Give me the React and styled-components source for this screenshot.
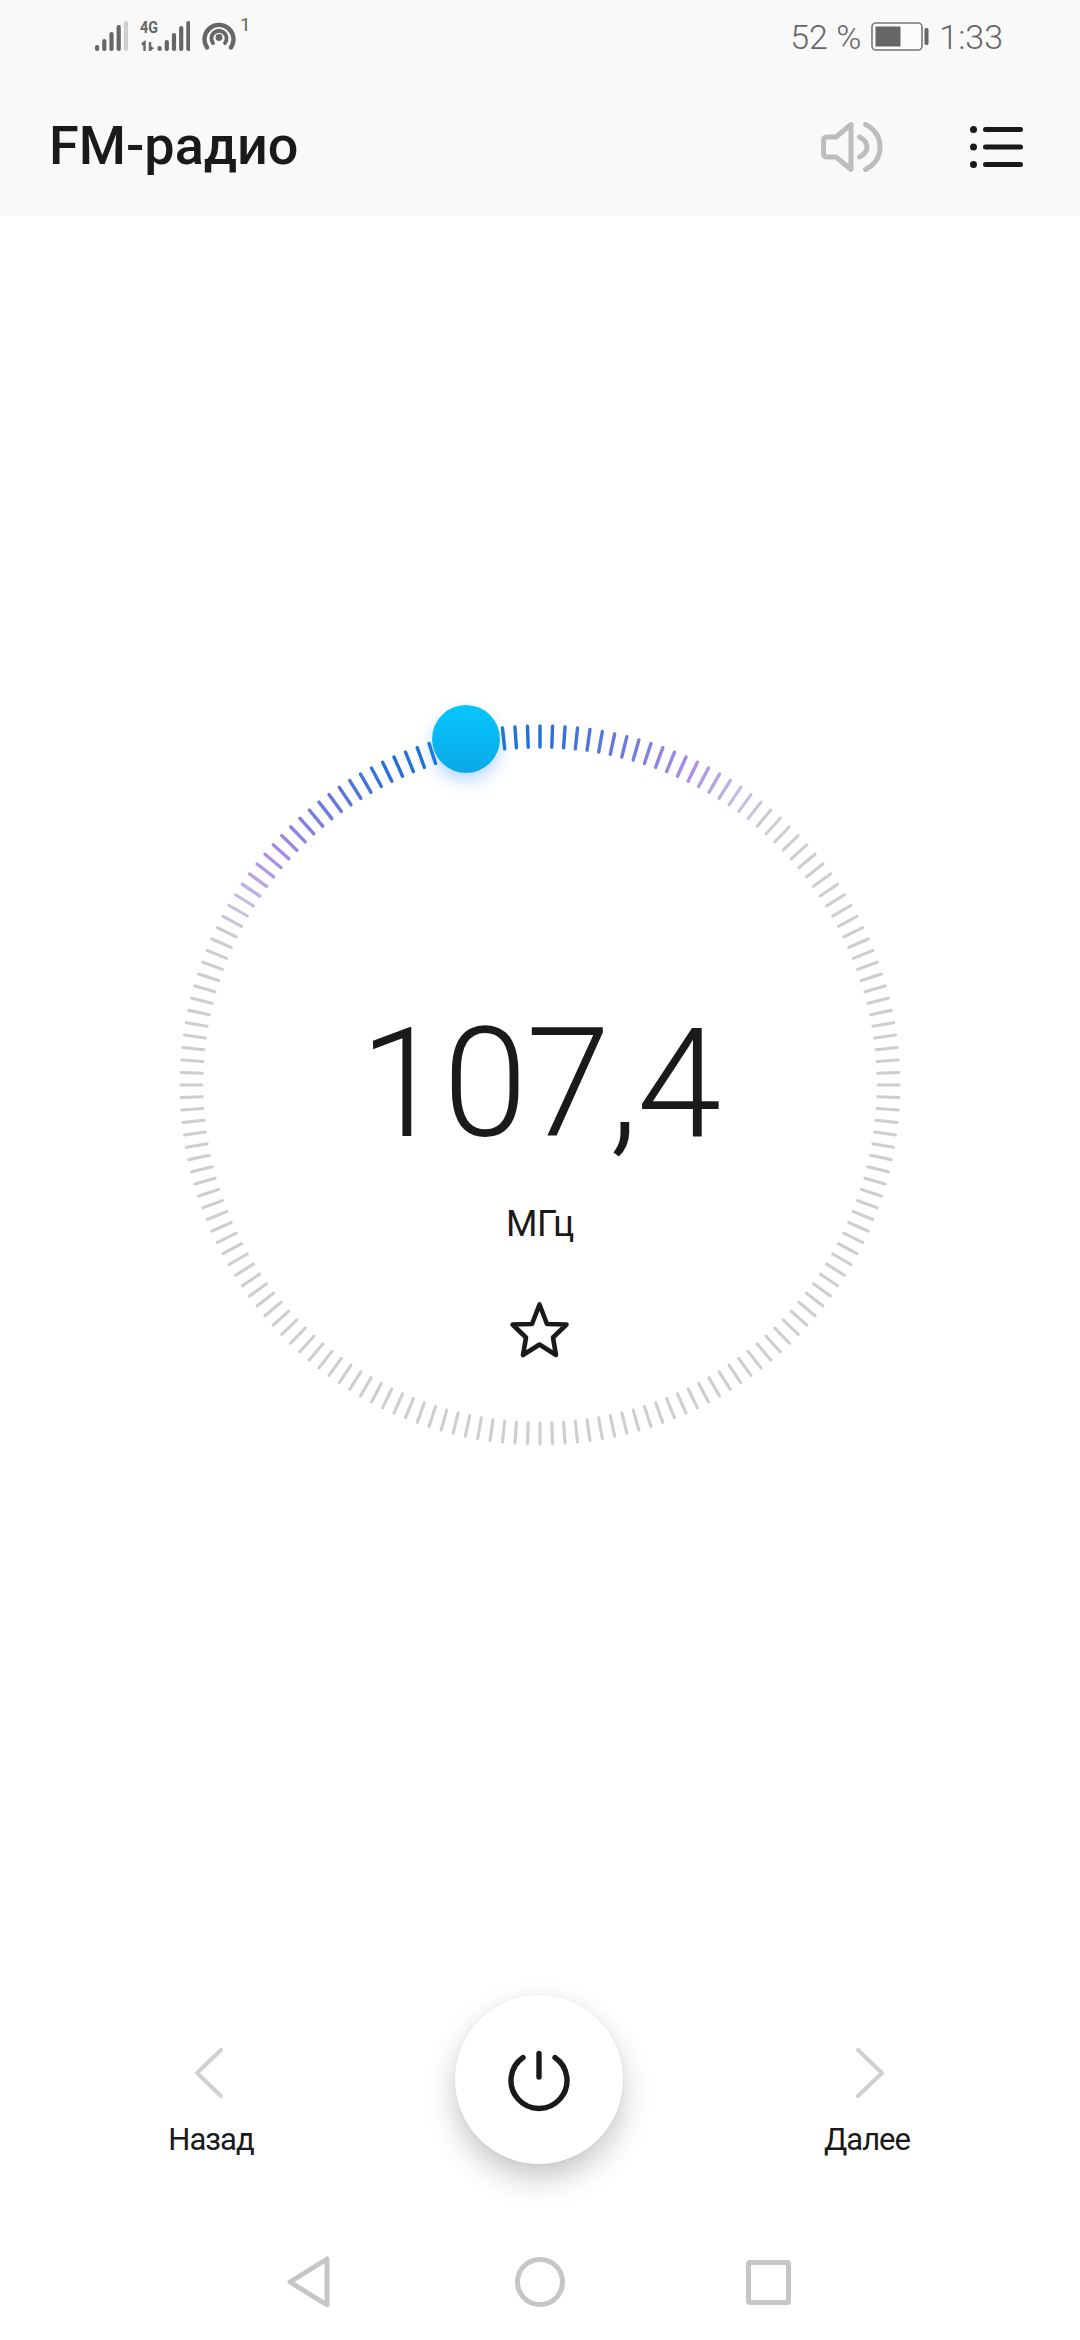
import React from 'react';
import styled, {createGlobalStyle} from 'styled-components';

const GlobalStyle = createGlobalStyle`
  html, body {
    margin: 0;
    padding: 0;
    background: #fff;
  }
  body {
    font-family: Roboto, 'Liberation Sans', sans-serif;
  }
`;

const Screen = styled.div`
  width: 1080px;
  height: 2340px;
  display: flex;
  flex-direction: column;
  overflow: hidden;
  background: #fff;
`;

const Header = styled.header`
  height: 216px;
  display: flex;
  flex-direction: column;
  background: #f9f9f9;
`;

const StatusBar = styled.div`
  height: 72px;
  display: flex;
  justify-content: space-between;
  align-items: center;
  padding: 0 77px 0 95px;
  box-sizing: border-box;
  color: #666;
`;

const StatusGroup = styled.div`
  display: flex;
  align-items: center;
  gap: ${props => props.$gap}px;
  padding-top: ${props => props.$top || 0}px;
`;

const StatusText = styled.span`
  font-size: 34px;
  font-weight: 300;
  line-height: 40px;
`;

const SimIndex = styled.span`
  align-self: flex-start;
  margin: -6px 0 0 -8px;
  font-size: 19px;
  line-height: 20px;
`;

const NetworkSvg = styled.svg`
  margin-top: -6px;
`;

const Toolbar = styled.div`
  flex: 1;
  display: flex;
  align-items: center;
  padding: 6px 57px 0 49px;
`;

const Title = styled.h1`
  flex: 1;
  margin: -3px 0 0;
  font-size: 54px;
  font-weight: 500;
  color: #1a1a1a;
`;

const ToolbarActions = styled.div`
  display: flex;
  align-items: center;
  gap: 87px;
`;

const Main = styled.main`
  flex: 1;
  padding-top: 508px;
`;

const Dial = styled.div`
  position: relative;
  width: 722px;
  height: 722px;
  margin: 0 auto;
  display: flex;
  flex-direction: column;
  align-items: center;
  padding-top: 284px;
  box-sizing: border-box;
  color: #1a1a1a;
`;

const DialTicks = styled.svg`
  position: absolute;
  left: 0;
  top: 0;
`;

const Thumb = styled.div`
  position: absolute;
  left: 253px;
  top: -19px;
  width: 68px;
  height: 68px;
  border-radius: 50%;
  background: linear-gradient(180deg, #07c6fe 0%, #0aa9e6 100%);
  box-shadow: 0 8px 16px rgba(30, 130, 255, 0.3);
`;

const Frequency = styled.div`
  position: relative;
  font-size: 152px;
  font-weight: 300;
  line-height: 152px;
  letter-spacing: -1.2px;
`;

const Unit = styled.div`
  position: relative;
  margin-top: 42px;
  font-size: 36px;
  line-height: 44px;
  letter-spacing: -0.4px;
`;

const StarIcon = styled.svg`
  position: relative;
  margin-top: 54px;
`;

const Controls = styled.div`
  display: grid;
  grid-template-columns: 1fr 168px 1fr;
  padding: 0 143px 0 141px;
  margin-bottom: 60px;
  height: 169px;
`;

const SideButton = styled.div`
  width: 140px;
  padding-top: 53px;
  display: flex;
  flex-direction: column;
  align-items: center;
  justify-self: ${props => props.$side};
`;

const ChevronIcon = styled.svg`
  margin-left: ${props => (props.$flip ? 6 : -5)}px;
`;

const SideLabel = styled.span`
  margin-top: 24px;
  font-size: 31px;
  line-height: 36px;
  letter-spacing: -1px;
  color: #1a1a1a;
`;

const PowerButton = styled.div`
  width: 168px;
  height: 169px;
  display: flex;
  align-items: center;
  justify-content: center;
  border-radius: 50%;
  background: #fff;
  box-shadow: 0 14px 30px rgba(0, 0, 0, 0.22), 0 0 4px rgba(0, 0, 0, 0.05);
`;

const NavBar = styled.nav`
  height: 116px;
  display: flex;
  align-items: center;
  justify-content: center;
  gap: 181px;
  padding-right: 2px;
`;

const TICK_COUNT = 180;
const THUMB_ANGLE = -12;

const COLOR_STOPS = [
  [0, [26, 122, 222]],
  [12, [34, 112, 214]],
  [25, [104, 120, 222]],
  [37, [168, 140, 230]],
  [46, [198, 186, 226]],
  [54, [206, 206, 206]],
];

function thumbDistance(angle) {
  return Math.abs(((angle - THUMB_ANGLE + 540) % 360) - 180);
}

function tickColor(angle) {
  const d = thumbDistance(angle);
  for (let i = 1; i < COLOR_STOPS.length; i++) {
    const [d0, c0] = COLOR_STOPS[i - 1];
    const [d1, c1] = COLOR_STOPS[i];
    if (d <= d1) {
      const t = (d - d0) / (d1 - d0);
      return `rgb(${c0.map((v, k) => Math.round(v + (c1[k] - v) * t)).join(',')})`;
    }
  }
  return '#cecece';
}

function Ticks() {
  const ticks = [];
  for (let i = 0; i < TICK_COUNT; i++) {
    const angle = (i * 360) / TICK_COUNT;
    const rad = (angle * Math.PI) / 180;
    const s = Math.sin(rad);
    const c = Math.cos(rad);
    ticks.push(
      <line
        key={i}
        x1={361 + 338 * s}
        y1={361 - 338 * c}
        x2={361 + 359 * s}
        y2={361 - 359 * c}
        stroke={tickColor(angle)}
        strokeWidth={thumbDistance(angle) < 46 ? 3.4 : 3.1}
        strokeLinecap="round"
      />
    );
  }
  return (
    <DialTicks width="722" height="722" viewBox="0 0 722 722">
      {ticks}
    </DialTicks>
  );
}

function Bars({x, heights, lastLight}) {
  return heights.map((h, i) => (
    <rect
      key={i}
      x={x + i * 7.2}
      y={30 - h}
      width="4.2"
      height={h}
      rx="2"
      fill={lastLight && i === heights.length - 1 ? '#cfcfcf' : '#666'}
    />
  ));
}

function SignalIcon() {
  return (
    <svg width="33" height="30" viewBox="0 0 33 30">
      <Bars x={0} heights={[6, 12, 19, 26, 30]} lastLight />
    </svg>
  );
}

function NetworkIcon() {
  return (
    <NetworkSvg width="50" height="36" viewBox="0 -6 50 36">
      <text x="0" y="12" fontFamily="Roboto, sans-serif" fontWeight="700" fontSize="17" fill="#666" textLength="18" lengthAdjust="spacingAndGlyphs">4G</text>
      <path d="M2 23.5 4.5 21.5V30M10 21V30" fill="none" stroke="#666" strokeWidth="2.4" />
      <path d="M10 24.5 14 27.3 10 30Z" fill="#666" />
      <Bars x={17.5} heights={[5, 11, 18, 25, 30]} />
    </NetworkSvg>
  );
}

function HotspotIcon() {
  return (
    <svg width="34" height="30" viewBox="0 0 34 30" fill="none" stroke="#666" strokeLinecap="round">
      <path d="M5 26.5A14.5 14.5 0 1 1 29 26.5" strokeWidth="4.4" />
      <path d="M11 22A7.6 7.6 0 1 1 23 22" strokeWidth="3.8" />
      <circle cx="17" cy="16.5" r="3.4" fill="#666" stroke="none" />
    </svg>
  );
}

function BatteryIcon() {
  return (
    <svg width="58" height="30" viewBox="0 0 58 30">
      <rect x="1" y="1" width="50" height="27" rx="4" fill="#fbfbfb" stroke="#777" strokeWidth="1.6" />
      <rect x="4.5" y="4.5" width="25" height="20" fill="#666" />
      <rect x="53.5" y="6" width="4" height="17" rx="1.5" fill="#666" />
    </svg>
  );
}

function SpeakerIcon() {
  return (
    <svg width="62" height="50" viewBox="0 0 62 50" fill="none" stroke="#bdbdbd" strokeWidth="5" strokeLinecap="round" strokeLinejoin="round">
      <path d="M30 2.5 15 15H6Q2.5 15 2.5 18.5V31.5Q2.5 35 6 35H15L30 47.5Z" />
      <path d="M38.5 15Q46 19 46 25T38.5 35" />
      <path d="M44.5 2.5Q59 10 59 25T44.5 47.5" />
    </svg>
  );
}

function ListIcon() {
  return (
    <svg width="53" height="42" viewBox="0 0 53 42">
      <g fill="#1a1a1a">
        <circle cx="3.5" cy="3.5" r="3.5" />
        <circle cx="3.5" cy="21" r="3.5" />
        <circle cx="3.5" cy="38.5" r="3.5" />
      </g>
      <path d="M15.5 3.5H50.5M15.5 21H50.5M15.5 38.5H50.5" stroke="#1a1a1a" strokeWidth="5" strokeLinecap="round" />
    </svg>
  );
}

function Chevron({flip}) {
  return (
    <ChevronIcon $flip={flip} width="28" height="50" viewBox="0 0 28 50" fill="none" stroke="#d0d0d0" strokeWidth="4" strokeLinecap="round" strokeLinejoin="round">
      <path d={flip ? 'M2 2 26 25 2 48' : 'M26 2 2 25 26 48'} />
    </ChevronIcon>
  );
}

function PowerIcon() {
  return (
    <svg width="64" height="64" viewBox="0 0 64 64" fill="none" stroke="#1a1a1a" strokeWidth="5.4" strokeLinecap="round">
      <path d="M16 9.5A28 28 0 1 0 48 9.5" />
      <path d="M32 5.5V29" />
    </svg>
  );
}

function App() {
  return (
    <Screen>
      <GlobalStyle />
      <Header>
        <StatusBar>
          <StatusGroup $gap={12}>
            <SignalIcon />
            <NetworkIcon />
            <HotspotIcon />
            <SimIndex>1</SimIndex>
          </StatusGroup>
          <StatusGroup $gap={10} $top={2}>
            <StatusText>52 %</StatusText>
            <BatteryIcon />
            <StatusText>1:33</StatusText>
          </StatusGroup>
        </StatusBar>
        <Toolbar>
          <Title>FM-радио</Title>
          <ToolbarActions>
            <SpeakerIcon />
            <ListIcon />
          </ToolbarActions>
        </Toolbar>
      </Header>
      <Main>
        <Dial>
          <Ticks />
          <Thumb />
          <Frequency>107,4</Frequency>
          <Unit>МГц</Unit>
          <StarIcon width="62" height="60" viewBox="0 0 62 60" fill="none" stroke="#1a1a1a" strokeWidth="4.6" strokeLinejoin="round">
            <path d="M30.5 4.5 38 24 57.5 24.5 44 37.5 47 55 30.5 44.5 14 55 17 37.5 3.5 24.5 23 24Z" />
          </StarIcon>
        </Dial>
      </Main>
      <Controls>
        <SideButton $side="start">
          <Chevron />
          <SideLabel>Назад</SideLabel>
        </SideButton>
        <PowerButton>
          <PowerIcon />
        </PowerButton>
        <SideButton $side="end">
          <Chevron flip />
          <SideLabel>Далее</SideLabel>
        </SideButton>
      </Controls>
      <NavBar>
        <svg width="47" height="52" viewBox="0 0 47 52" fill="none" stroke="#c6c6c6" strokeWidth="5" strokeLinejoin="round">
          <path d="M40 3V49L3 26Z" />
        </svg>
        <svg width="50" height="50" viewBox="0 0 50 50" fill="none" stroke="#c6c6c6" strokeWidth="5">
          <circle cx="25" cy="25" r="22.5" />
        </svg>
        <svg width="45" height="45" viewBox="0 0 45 45" fill="none" stroke="#c6c6c6" strokeWidth="5" strokeLinejoin="round">
          <rect x="2.5" y="2.5" width="40" height="40" rx="1.5" />
        </svg>
      </NavBar>
    </Screen>
  );
}

export default App;
